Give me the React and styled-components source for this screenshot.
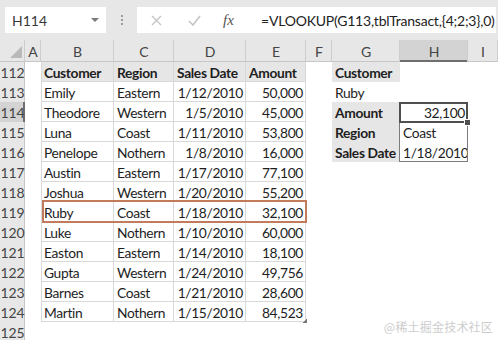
import React from 'react';
import styled, { createGlobalStyle } from 'styled-components';

const GlobalStyle = createGlobalStyle`
  body {
    margin: 0;
    background: #ffffff;
    font-family: Lato, "Noto Sans", sans-serif;
  }
`;

const Page = styled.div`
  position: relative;
  width: 498px;
  height: 340px;
  overflow: hidden;
  background: #ffffff;
`;

const FormulaBar = styled.div`
  display: flex;
  align-items: center;
  height: 40px;
  padding: 0 2px 0 5px;
  box-sizing: border-box;
  background: #e7e7e7;
`;

const NameBox = styled.div`
  display: flex;
  flex-shrink: 0;
  align-items: center;
  justify-content: space-between;
  width: 101px;
  height: 26px;
  padding: 0 7px 0 7px;
  box-sizing: border-box;
  background: #ffffff;
  color: #3a3a3a;
  font-size: 14px;
`;

const Caret = styled.span`
  width: 0;
  height: 0;
  border-left: 4px solid transparent;
  border-right: 4px solid transparent;
  border-top: 4px solid #7a7a7a;
`;

const Dots = styled.div`
  display: flex;
  flex-shrink: 0;
  flex-direction: column;
  gap: 2px;
  margin: 0 14px 0 15px;
  span {
    width: 2px;
    height: 2px;
    background: #9a9a9a;
  }
`;

const FormulaBox = styled.div`
  flex: 1;
  min-width: 0;
  display: flex;
  align-items: center;
  height: 26px;
  background: #ffffff;
`;

const BarIcon = styled.span`
  display: flex;
  flex-shrink: 0;
  align-items: center;
  justify-content: center;
  width: ${(p) => p.$w}px;
`;

const Fx = styled.span`
  flex-shrink: 0;
  width: 34px;
  padding-left: 10px;
  box-sizing: border-box;
  font-family: "Liberation Serif", serif;
  font-style: italic;
  font-size: 15px;
  color: #555555;
`;

const Formula = styled.div`
  padding-left: 14px;
  font-size: 14px;
  letter-spacing: -0.22px;
  color: #222222;
  white-space: nowrap;
  overflow: hidden;
`;

const Sheet = styled.div`
  display: grid;
  grid-template-columns: 25px 16px 73px 60px 72px 60px 26px 68px 68px 30px;
  grid-template-rows: 22px repeat(14, 20px);
  background: #ffffff;
`;

const ColHead = styled.div`
  grid-row: 1;
  grid-column: ${(p) => p.$c};
  display: flex;
  align-items: center;
  justify-content: center;
  background: ${(p) => (p.$active ? '#d3d3d3' : '#e7e7e7')};
  color: #444444;
  font-size: 14px;
  box-shadow: inset -1px 0 0 #cdcdcd,
    inset 0 ${(p) => (p.$active ? '-2px 0 #6e6e6e' : '-1px 0 #c6c6c6')};
`;

const Corner = styled(ColHead)`
  align-items: flex-end;
  justify-content: flex-end;
  padding: 0 3px 4px 0;
  box-sizing: border-box;
`;

const RowHead = styled.div`
  grid-column: 1;
  grid-row: ${(p) => p.$r};
  display: flex;
  align-items: center;
  justify-content: center;
  background: ${(p) => (p.$active ? '#d3d3d3' : '#e7e7e7')};
  color: #444444;
  font-size: 14px;
  letter-spacing: -0.2px;
  box-shadow: inset ${(p) => (p.$active ? '-2px 0 0 #6e6e6e' : '-1px 0 0 #c6c6c6')};
`;

const Cell = styled.div`
  grid-column: ${(p) => p.$c};
  grid-row: ${(p) => p.$r};
  display: flex;
  align-items: center;
  justify-content: ${(p) => (p.$align === 'right' ? 'flex-end' : 'flex-start')};
  padding: 0 3px;
  box-sizing: border-box;
  overflow: hidden;
  white-space: nowrap;
  font-size: 13.8px;
  letter-spacing: -0.35px;
  font-weight: ${(p) => (p.$bold ? 700 : 400)};
  color: #1e1e1e;
  background: ${(p) => (p.$fill ? '#e7e6e6' : '#ffffff')};
  box-shadow: ${(p) =>
    p.$grid
      ? `inset -1px -1px 0 #d9d9d9${p.$first ? ', inset 1px 0 0 #d9d9d9' : ''}`
      : 'none'};
`;

const RowMark = styled.div`
  grid-column: 3 / 7;
  grid-row: 9;
  margin: -2px -1px -1px 1px;
  border: 2px solid #c27b5c;
  pointer-events: none;
`;

const LookupBox = styled.div`
  grid-column: 9;
  grid-row: 4 / 7;
  margin: 0 0 0 -1px;
  border: 1px solid #7c7c7c;
  pointer-events: none;
`;

const Selection = styled.div`
  position: relative;
  grid-column: 9;
  grid-row: 4;
  margin: 0 0 -1px -1px;
  border: 2px solid #4f4f4f;
  pointer-events: none;
  &::after {
    content: '';
    position: absolute;
    right: -5px;
    bottom: -5px;
    width: 5px;
    height: 5px;
    background: #4f4f4f;
    border: 1px solid #ffffff;
  }
`;

const ResizeMark = styled.div`
  grid-column: 6;
  grid-row: 14;
  align-self: end;
  justify-self: end;
  width: 4px;
  height: 4px;
  margin: 0 -1px -1px 0;
  background: linear-gradient(135deg, transparent 50%, #7a7a7a 50%);
`;

const Watermark = styled.div`
  position: absolute;
  right: 5px;
  bottom: 5px;
  font-family: "Noto Sans CJK SC", sans-serif;
  font-size: 12px;
  color: #cdcdcd;
  letter-spacing: 0.2px;
`;

const table = [
  ['Customer', 'Region', 'Sales Date', 'Amount'],
  ['Emily', 'Eastern', '1/12/2010', '50,000'],
  ['Theodore', 'Western', '1/5/2010', '45,000'],
  ['Luna', 'Coast', '1/11/2010', '53,800'],
  ['Penelope', 'Nothern', '1/8/2010', '16,000'],
  ['Austin', 'Eastern', '1/17/2010', '77,100'],
  ['Joshua', 'Western', '1/20/2010', '55,200'],
  ['Ruby', 'Coast', '1/18/2010', '32,100'],
  ['Luke', 'Nothern', '1/10/2010', '60,000'],
  ['Easton', 'Eastern', '1/14/2010', '18,100'],
  ['Gupta', 'Western', '1/24/2010', '49,756'],
  ['Barnes', 'Coast', '1/21/2010', '28,600'],
  ['Martin', 'Nothern', '1/15/2010', '84,523'],
];

const lookup = [
  { label: 'Customer', value: '' },
  { label: 'Ruby', value: '', plain: true },
  { label: 'Amount', value: '32,100', align: 'right' },
  { label: 'Region', value: 'Coast' },
  { label: 'Sales Date', value: '1/18/2010' },
];

const columns = ['A', 'B', 'C', 'D', 'E', 'F', 'G', 'H', 'I'];

function CornerGlyph() {
  return (
    <svg width="12" height="12" viewBox="0 0 12 12">
      <path d="M12 0 L12 12 L0 12 Z" fill="#b9b9b9" />
    </svg>
  );
}

function App() {
  const cells = [];
  for (let i = 0; i < 14; i++) {
    const num = 112 + i;
    const r = i + 2;
    const row = table[i];
    const look = lookup[i];
    cells.push(
      <RowHead key={`h${i}`} $r={r} $active={num === 114}>
        {num}
      </RowHead>
    );
    for (let c = 0; c < 4; c++) {
      cells.push(
        <Cell
          key={`t${i}-${c}`}
          $r={r}
          $c={c + 3}
          $grid={!!row}
          $first={c === 0}
          $bold={i === 0}
          $fill={i === 0}
          $align={i > 0 && c >= 2 ? 'right' : 'left'}
        >
          {row ? row[c] : ''}
        </Cell>
      );
    }
    if (look) {
      cells.push(
        <Cell key={`g${i}`} $r={r} $c={8} $bold={!look.plain} $fill={!look.plain}>
          {look.label}
        </Cell>
      );
      cells.push(
        <Cell key={`v${i}`} $r={r} $c={9} $align={look.align}>
          {look.value}
        </Cell>
      );
    }
  }

  return (
    <Page>
      <GlobalStyle />
      <FormulaBar>
        <NameBox>
          H114
          <Caret />
        </NameBox>
        <Dots>
          <span />
          <span />
          <span />
        </Dots>
        <FormulaBox>
          <BarIcon $w={38}>
            <svg width="11" height="11" viewBox="0 0 11 11">
              <path d="M1 1 L10 10 M10 1 L1 10" stroke="#c4c4c4" strokeWidth="1.4" />
            </svg>
          </BarIcon>
          <BarIcon $w={38}>
            <svg width="13" height="11" viewBox="0 0 13 11">
              <path d="M1 6 L5 10 L12 1" stroke="#c4c4c4" strokeWidth="1.6" fill="none" />
            </svg>
          </BarIcon>
          <Fx>fx</Fx>
          <Formula>=VLOOKUP(G113,tblTransact,{'{'}4;2;3{'}'},0)</Formula>
        </FormulaBox>
      </FormulaBar>
      <Sheet>
        <Corner $c={1}>
          <CornerGlyph />
        </Corner>
        {columns.map((c, idx) => (
          <ColHead key={c} $c={idx + 2} $active={c === 'H'}>
            {c}
          </ColHead>
        ))}
        {cells}
        <RowMark />
        <LookupBox />
        <Selection />
        <ResizeMark />
      </Sheet>
      <Watermark>@稀土掘金技术社区</Watermark>
    </Page>
  );
}

export default App;
